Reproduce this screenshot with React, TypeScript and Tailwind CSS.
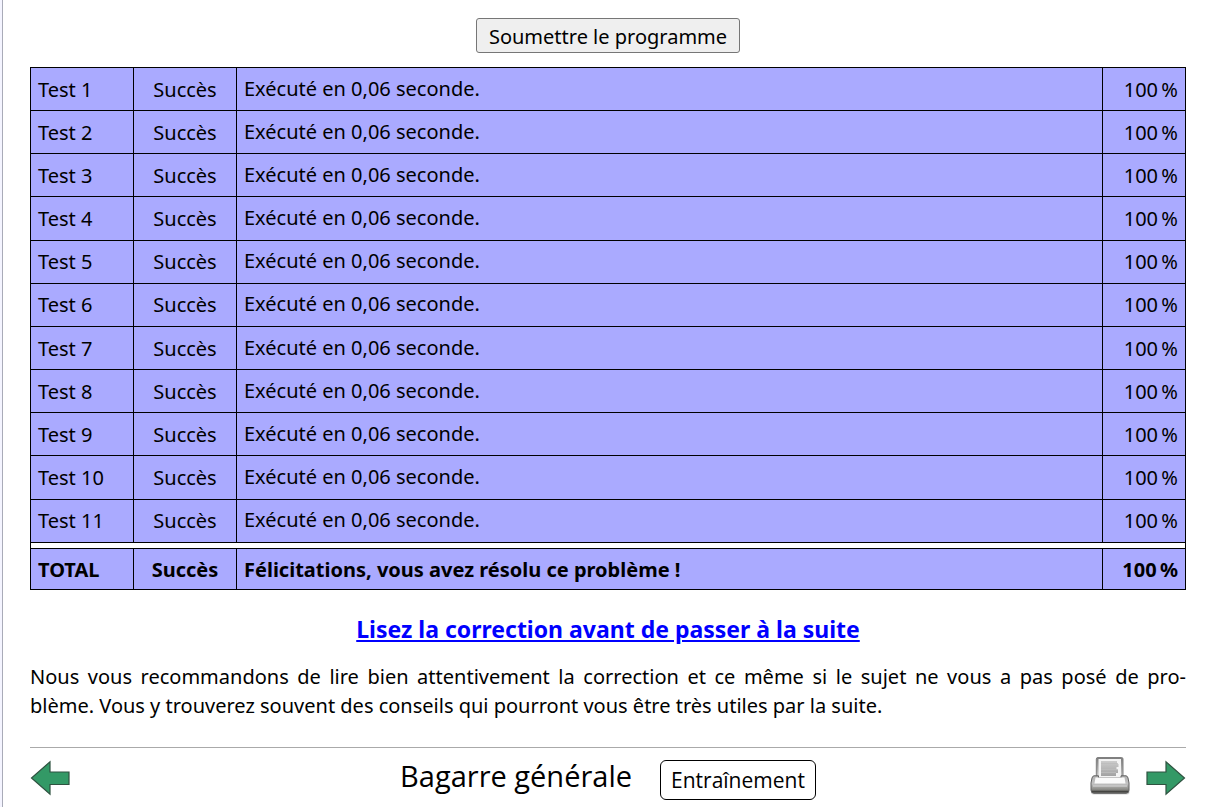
const tests = Array.from({ length: 11 }, (_, i) => ({
  name: `Test ${i + 1}`,
  status: 'Succès',
  message: 'Exécuté en 0,06 seconde.',
  score: '100\u202f%',
}));

function Arrow({ flip = false }: { flip?: boolean }) {
  return (
    <svg viewBox="0 0 40 36" className={flip ? 'h-9 w-10 -scale-x-100' : 'h-9 w-10'} aria-hidden="true">
      <path
        d="M1 12H20V1.800L38.500 18L20 34.200V24.500H1Z"
        fill="#339966"
        stroke="#2f5240"
        strokeWidth="1.200"
      />
    </svg>
  );
}

function Printer() {
  return (
    <svg viewBox="0 0 40 40" className="size-10" aria-hidden="true">
      <defs>
        <linearGradient id="tray" x1="0" y1="0" x2="0" y2="1">
          <stop offset="0" stopColor="#b4b4b4" />
          <stop offset="0.45" stopColor="#c2c2c2" />
          <stop offset="0.75" stopColor="#8f8f8b" />
          <stop offset="1" stopColor="#5e5e5a" />
        </linearGradient>
        <linearGradient id="back" x1="0" y1="0" x2="0" y2="1">
          <stop offset="0" stopColor="#7c7c7c" />
          <stop offset="1" stopColor="#c4c4c4" />
        </linearGradient>
        <linearGradient id="print" x1="0" y1="0" x2="0" y2="1">
          <stop offset="0" stopColor="#cccccc" />
          <stop offset="1" stopColor="#a2a2a2" />
        </linearGradient>
      </defs>
      <rect x="1" y="33" width="38.500" height="5.500" rx="2.500" fill="#d4d4d4" />
      <path d="M8 1.500H31.500Q33 1.500 33 3V21H6.300V3Q6.300 1.500 8 1.500Z" fill="url(#back)" stroke="#808080" />
      <path d="M8.500 3H31V21H8.500Z" fill="#f3f3f3" />
      <path d="M11 5H27V8H28.500V11H26.500V14H28V17H26V20H11Z" fill="url(#print)" />
      <path
        d="M11 7.500H28M11 10.500H27M11 13.500H28M11 16.500H26"
        stroke="#bdbdbd"
        strokeWidth="0.800"
      />
      <path
        d="M4 19.800H8.500V22H31V19.800H36Q37.500 20 38 22L39 27V34Q39 37.300 36 37.300H4Q1 37.300 1 34V27L2 22Q2.500 20 4 19.800Z"
        fill="url(#tray)"
        stroke="#636363"
      />
      <path d="M5.500 21.500H34.500L35.500 27.500H4.500Z" fill="#fafafa" />
      <path d="M3 30H37" stroke="#d8d8d8" />
      <path d="M2 35.500H38" stroke="#454542" strokeWidth="1.500" />
    </svg>
  );
}

const cell = 'border border-black bg-[#aaaaff] px-[7px] py-0';

export default function App() {
  return (
    <div className="min-h-screen bg-[#f4f4ff] pl-[2px] font-['Noto_Sans',sans-serif] text-[20px] leading-[29px] text-black">
      <div className="min-h-screen border-l border-[#a9abb8] bg-white px-[27px] pt-[18px]">
        <div className="flex justify-center">
          <button
            type="button"
            className="h-[35px] rounded-[3px] border border-[#767676] bg-[#efefef] px-3 pt-[2px]"
          >
            Soumettre le programme
          </button>
        </div>

        <table className="mt-[14px] h-[523px] w-full table-fixed border-collapse border border-black">
          <colgroup>
            <col className="w-[103px]" />
            <col className="w-[103px]" />
            <col />
            <col className="w-[83px]" />
          </colgroup>
          <tbody>
            {tests.map((test) => (
              <tr key={test.name} className="h-[43px]">
                <td className={cell}>{test.name}</td>
                <td className={`${cell} text-center`}>{test.status}</td>
                <td className={`${cell} pb-[2px]`}>{test.message}</td>
                <td className={`${cell} text-right`}>{test.score}</td>
              </tr>
            ))}
            <tr className="h-[6px] leading-none">
              <td colSpan={4} className="h-[6px] border border-black p-0" />
            </tr>
            <tr className="h-[41px] font-bold">
              <td className={`${cell} pt-[2px]`}>TOTAL</td>
              <td className={`${cell} pt-[2px] text-center`}>Succès</td>
              <td className={`${cell} pt-[2px]`}>Félicitations, vous avez résolu ce problème !</td>
              <td className={`${cell} pt-[2px] text-right`}>{'100\u202f%'}</td>
            </tr>
          </tbody>
        </table>

        <p className="mt-[23px] text-center text-[23px] leading-8 font-bold">
          <a href="#correction" className="text-[#0000ff] underline">
            Lisez la correction avant de passer à la suite
          </a>
        </p>

        <p className="mt-[17px] text-justify">
          <span className="block [text-align-last:justify]">
            Nous vous recommandons de lire bien attentivement la correction et ce même si le sujet ne
            vous a pas posé de pro-
          </span>
          blème. Vous y trouverez souvent des conseils qui pourront vous être très utiles par la
          suite.
        </p>

        <footer className="mt-[27px] flex items-start justify-between border-t border-[#aaaaaa] pt-2">
          <a href="#precedent" aria-label="Précédent" className="mt-1 mr-14">
            <Arrow flip />
          </a>
          <div className="flex items-start gap-7 font-['Open_Sans',sans-serif]">
            <h1 className="text-[29px] leading-10">Bagarre générale</h1>
            <button
              type="button"
              className="mt-1 h-10 rounded-[6px] border border-black bg-white px-[10px] text-[21px]"
            >
              Entraînement
            </button>
          </div>
          <div className="flex items-start gap-4">
            <a href="#imprimer" aria-label="Imprimer">
              <Printer />
            </a>
            <a href="#suivant" aria-label="Suivant" className="mt-1">
              <Arrow />
            </a>
          </div>
        </footer>
      </div>
    </div>
  );
}
